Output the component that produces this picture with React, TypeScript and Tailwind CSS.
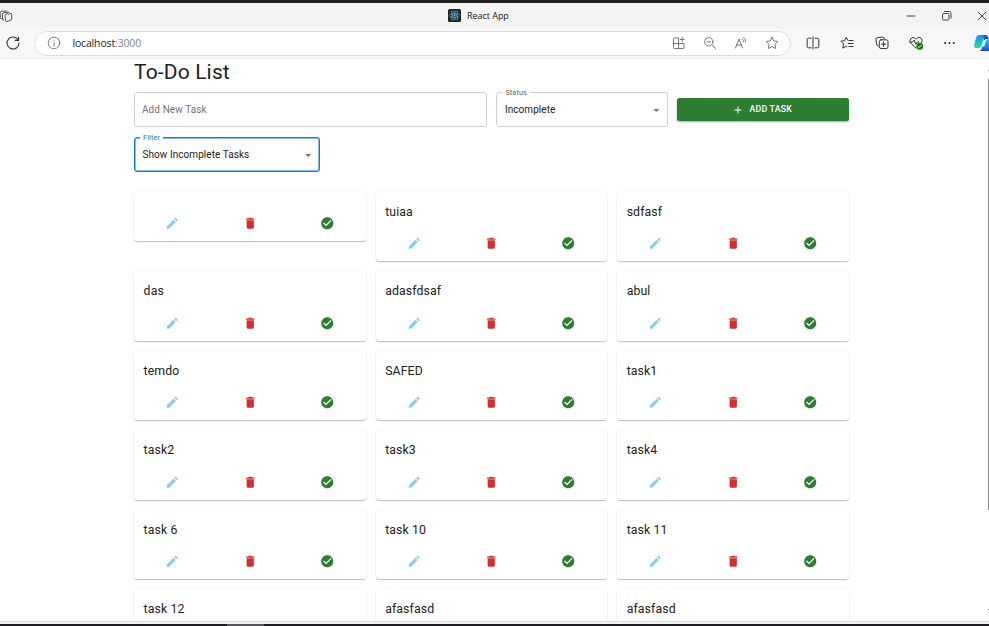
import React from "react";

const tasks = [
  "", "tuiaa", "sdfasf",
  "das", "adasfdsaf", "abul",
  "temdo", "SAFED", "task1",
  "task2", "task3", "task4",
  "task 6", "task 10", "task 11",
  "task 12", "afasfasd", "afasfasd",
];

type IconProps = { children: React.ReactNode; className?: string; size?: number };

function Line({ children, className = "text-[#444]", size = 14 }: IconProps) {
  return (
    <svg
      width={size}
      height={size}
      viewBox="0 0 14 14"
      fill="none"
      stroke="currentColor"
      strokeWidth="1"
      strokeLinecap="round"
      strokeLinejoin="round"
      className={`block shrink-0 overflow-visible ${className}`}
    >
      {children}
    </svg>
  );
}

function Solid({ children, className = "", size = 14.5 }: IconProps) {
  return (
    <svg width={size} height={size} viewBox="0 0 24 24" fill="currentColor" className={`block shrink-0 ${className}`}>
      {children}
    </svg>
  );
}

function TitleBar() {
  return (
    <header className="flex h-[25px] shrink-0 items-center bg-[#f3f3f3]">
      <Line className="-ml-px text-[#444]" size={14}>
        <g strokeWidth="0.95">
          <path d="M6 6.300q0-.8.8-1.100L8.500 4.600 9.500 5.300l2.200-.8q1-.2 1 .8V10q0 .8-.8 1.100L8 12.500q-1 .3-1.300-.6z" />
          <path d="M4.800 11.300q-1 0-1.100-1L3.300 5q0-.8.8-1.100L6 3.200l1 .6 2-.7q.9-.2 1.200.6" />
          <path d="M2.300 9.800q-.8-.1-.9-1L1 3.700q0-.8.8-1.100l1.900-.7 1 .6 1.900-.7q.9-.2 1.200.5" />
        </g>
      </Line>
      <div className="ml-[435px] flex flex-1 items-center">
        <svg width="13" height="13" viewBox="0 0 13 13" className="block">
          <rect width="13" height="13" rx="1.5" fill="#20232a" />
          <g fill="none" stroke="#4fb3ce" strokeWidth="0.7">
            <ellipse cx="6.5" cy="6.5" rx="5.2" ry="2" />
            <ellipse cx="6.5" cy="6.5" rx="5.2" ry="2" transform="rotate(60 6.5 6.5)" />
            <ellipse cx="6.5" cy="6.5" rx="5.2" ry="2" transform="rotate(120 6.5 6.5)" />
          </g>
          <circle cx="6.5" cy="6.5" r="1" fill="#61dafb" />
        </svg>
        <span className="ml-[6px] font-['Open_Sans',sans-serif] text-[9px] leading-[14px] tracking-[-0.04px] text-[#222]">React App</span>
      </div>
      <div className="-mr-[11px] flex text-[#444]">
        <span className="flex w-[35.5px] justify-center"><Line size={14}><path d="M3 7h8" /></Line></span>
        <span className="flex w-[35.5px] justify-center">
          <Line size={14}><rect x="2.500" y="4.500" width="6.500" height="6.500" rx="1.200" /><path d="M4.500 2.500h4.700A1.800 1.800 0 0 1 11 4.300V9" /></Line>
        </span>
        <span className="flex w-[35.5px] justify-center"><Line size={14}><path d="m3.2 3.2 7.6 7.6m0-7.6-7.6 7.6" /></Line></span>
      </div>
    </header>
  );
}

function Toolbar() {
  return (
    <div className="flex h-[31px] shrink-0 items-center border-b border-[#eee] bg-[#f7f7f7]">
      <Line className="ml-[6px] text-[#333]" size={14}>
        <path d="M12.3 4.2A6 6 0 1 0 13 7M12.6 1v3.4H9.2" strokeWidth="1.1" />
      </Line>
      <div className="ml-[14.4px] flex h-[25px] w-[757px] shrink-0 items-center rounded-full border border-[#dcdcdc] bg-white pl-[12px] pr-[3px]">
        <Line className="text-[#777]" size={14}>
          <circle cx="7" cy="7" r="5.8" strokeWidth="0.9" />
          <path d="M7 6.3V10M7 4.1v.3" />
        </Line>
        <span className="ml-[11px] flex-1 font-['Open_Sans',sans-serif] text-[10.5px] leading-[16px] tracking-[-0.15px] text-[#222]">
          localhost<span className="text-[#858585]">:3000</span>
        </span>
        <div className="flex text-[#777]">
          <span className="flex w-[31px] justify-center">
            <Line className="text-[#777]">
              <path d="M6.500 2h-4a1 1 0 0 0-1 1v8.500a1 1 0 0 0 1 1H11a1 1 0 0 0 1-1v-4H1.500M6.500 2v10.500M10.300 1.500v4M8.300 3.500h4" />
            </Line>
          </span>
          <span className="flex w-[31px] justify-center">
            <Line className="text-[#777]"><circle cx="5.8" cy="5.8" r="4.2" /><path d="M4 5.8h3.6M9 9l3.6 3.6" /></Line>
          </span>
          <span className="flex w-[31px] justify-center">
            <Line className="text-[#777]">
              <path d="M1.5 12 5 3l3.5 9M2.6 9h4.8M8.3 3.2q1.2 1 1.2 2.6M9.3 1.4q2.6 1.6 2.4 4.6" />
            </Line>
          </span>
          <span className="flex w-[31px] justify-center">
            <Line className="text-[#777]"><path d="m7 1.2 1.8 3.7 4.1.6-3 2.9.7 4.1L7 10.6l-3.6 1.9.7-4.1-3-2.9 4.1-.6z" /></Line>
          </span>
        </div>
      </div>
      <div className="ml-[4.3px] flex shrink-0 items-center">
        <span className="flex w-[34.4px] justify-center">
          <Line className="text-[#333]">
            <path d="M7 1v12M5 2.2H2.5A1.3 1.3 0 0 0 1.2 3.5v7a1.3 1.3 0 0 0 1.3 1.3H5M9 2.2h2.5a1.3 1.3 0 0 1 1.3 1.3v7a1.3 1.3 0 0 1-1.3 1.3H9" />
          </Line>
        </span>
        <span className="flex w-[34.4px] justify-center">
          <Line className="text-[#333]">
            <path d="M7.8 4.3 6.2 1.2 4.6 4.6.9 5.2l2.6 2.7-.7 4.2 3.4-1.8.7.4M9 4.5h4M8.2 7.5H13M9 10.5h4" />
          </Line>
        </span>
        <span className="flex w-[34.4px] justify-center">
          <Line className="text-[#333]">
            <path d="M3.2 9.8A2 2 0 0 1 1.5 8L1 4A2 2 0 0 1 2.8 1.6l4.5-.5A2 2 0 0 1 9.5 2.8" />
            <rect x="4.3" y="3.8" width="8.7" height="8.7" rx="1.7" />
            <path d="M8.6 6v4.4M6.4 8.2h4.4" />
          </Line>
        </span>
        <span className="flex w-[34.4px] justify-center">
          <Line className="text-[#333]">
            <path d="m6.7 11.9-4.8-4.700a3.200 3.200 0 0 1 4.600-4.600l.5.5.5-.5a3.200 3.200 0 0 1 5 4" />
            <path d="M.8 6h2.800l1.500-2 1.700 4.200L8.200 6h1.500" />
            <circle cx="10.7" cy="10.3" r="3.5" fill="#107c10" stroke="none" />
            <path d="m9.100 10.500 1 1 2.100-2.200" stroke="#fff" strokeWidth="0.9" />
          </Line>
        </span>
        <span className="flex w-[34.4px] justify-center">
          <Line className="text-[#333]">
            <g fill="currentColor" stroke="none"><circle cx="2.2" cy="7" r="1.1" /><circle cx="6.500" cy="7" r="1.1" /><circle cx="10.800" cy="7" r="1.1" /></g>
          </Line>
        </span>
        <svg width="18" height="18" viewBox="0 0 18 18" className="ml-[6px] block shrink-0">
          <defs>
            <linearGradient id="wingLeft" x1="0" y1="0" x2="0" y2="1">
              <stop offset="0" stopColor="#1593d8" /><stop offset="0.5" stopColor="#18bde0" /><stop offset="1" stopColor="#3ccf9c" />
            </linearGradient>
            <linearGradient id="wingRight" x1="0" y1="0" x2="0" y2="1">
              <stop offset="0" stopColor="#25cdc8" /><stop offset="0.6" stopColor="#188be0" /><stop offset="1" stopColor="#1846d8" />
            </linearGradient>
          </defs>
          <path d="M5.500 1H12q-1.500.5-2.200 3L8 10.500Q7 14 4.500 14H2Q-.3 14 .3 10.500L2 4Q2.800 1 5.500 1z" fill="url(#wingLeft)" />
          <path d="M9.500 1H12q1.700 0 2.200 2.500l.4 1.500h-2.300Q10.500 5 9.800 7.500z" fill="#1558cf" />
          <path d="M14.300 5H18v12H5q2 0 2.700-2.500l.8-2.700h1.800l1.500-5Q12.400 5 14.300 5z" fill="url(#wingRight)" />
          <path d="m10.300 6-2 6.500h1.700l2-6.500z" fill="#f7f7f7" />
        </svg>
      </div>
    </div>
  );
}

type SelectProps = { label: string; value: string; focused?: boolean; className: string };

function SelectField({ label, value, focused = false, className }: SelectProps) {
  return (
    <fieldset
      className={`min-w-0 rounded-[3px] px-[5px] ${focused ? "border border-[#1976d2] shadow-[inset_0_0_0_0.5px_#1976d2]" : "border border-[#cfcfcf]"} ${className}`}
    >
      <legend className={`h-[8px] bg-white px-[3px] text-[7.4px] leading-[9px] tracking-[0.08px] ${focused ? "text-[#1976d2]" : "text-[#666]"}`}>
        {label}
      </legend>
      <div className="flex h-[28px] items-center justify-between pl-[2.500px]">
        <span className="text-[10px] leading-[14px] tracking-[0.06px] text-[#212121]">{value}</span>
        <Solid size={14.5} className="-mr-[1.500px] text-[#757575]"><path d="m7 10 5 5 5-5z" /></Solid>
      </div>
    </fieldset>
  );
}

function TaskCard({ name }: { name: string }) {
  return (
    <article className="rounded-[3px] bg-white pb-[5.5px] shadow-[0_1px_1px_rgba(0,0,0,0.24),0_0_2px_rgba(0,0,0,0.09)]">
      <div className="px-[9.6px] py-[10px]">
        {name && <h2 className="text-[12.3px] font-normal leading-[20px] tracking-[0.1px] text-[#212121]">{name}</h2>}
      </div>
      <div className="grid h-[24px] grid-cols-3 place-items-center pr-[0.4px]">
        <Solid className="text-[#87ceeb]">
          <path d="M3 17.25V21h3.75L17.81 9.94l-3.75-3.75zM20.71 7.040c.39-.39.39-1.020 0-1.410l-2.340-2.340a.996.996 0 0 0-1.410 0l-1.830 1.830 3.750 3.750z" />
        </Solid>
        <Solid className="text-[#d32f2f]">
          <path d="M6 19c0 1.100.9 2 2 2h8c1.100 0 2-.9 2-2V7H6zM19 4h-3.500l-1-1h-5l-1 1H5v2h14z" />
        </Solid>
        <Solid className="text-[#2e7d32]">
          <path d="M12 2C6.480 2 2 6.480 2 12s4.480 10 10 10 10-4.480 10-10S17.520 2 12 2m-2 15-5-5 1.410-1.410L10 14.170l7.590-7.590L19 8z" />
        </Solid>
      </div>
    </article>
  );
}

export default function App() {
  return (
    <div className="flex h-[626px] w-[989px] flex-col overflow-hidden bg-[#1f1f1f] pt-[3px] font-['Roboto',sans-serif]">
      <TitleBar />
      <Toolbar />
      <div className="flex min-h-0 flex-1 overflow-hidden bg-white">
        <main className="ml-[134px] w-[715px] shrink-0">
          <h1 className="h-[33px] pt-[1px] text-[21px] font-normal leading-[25px] tracking-[0.15px] text-[#212121]">To-Do List</h1>
          <div className="flex items-center">
            <div className="flex h-[35px] w-[353px] items-center rounded-[3px] border border-[#cfcfcf] px-[7px] text-[10px] tracking-[0.09px] text-[#757575]">
              Add New Task
            </div>
            <SelectField label="Status" value="Incomplete" className="-mt-[4px] ml-[9.400px] h-[39px] w-[171.500px]" />
            <button className="ml-[9.5px] flex h-[23px] flex-1 items-center justify-center gap-[5px] rounded-[2.5px] bg-[#2e7d32] pr-[2px] text-[8.7px] font-medium leading-[15px] tracking-[0.25px] text-white shadow-[0_1px_2px_rgba(0,0,0,0.35)]">
              <Solid size={12}><path d="M19 13h-6v6h-2v-6H5v-2h6V5h2v6h6z" /></Solid>
              ADD TASK
            </button>
          </div>
          <SelectField label="Filter" value="Show Incomplete Tasks" focused className="mt-[6px] h-[39px] w-[186px]" />
          <section className="mt-[19.600px] grid grid-cols-3 items-start gap-x-[9.600px] gap-y-[10px]">
            {tasks.map((name, i) => <TaskCard key={i} name={name} />)}
          </section>
        </main>
        <aside className="ml-auto flex w-[2px] flex-col items-end pt-[11px]">
          <div className="h-px w-px bg-[#888]" />
          <div className="mt-[8px] h-[431px] w-px bg-[#888]" />
          <div className="mt-[99px] h-px w-px bg-[#777]" />
        </aside>
      </div>
      <div className="h-[3px] shrink-0 border-t border-[#d8d8d8] bg-[#f3f3f3]" />
      <div className="h-[2px] shrink-0 bg-[#1c1e22] pl-[227px]"><div className="h-full w-[37px] bg-[#55575a]" /></div>
    </div>
  );
}
